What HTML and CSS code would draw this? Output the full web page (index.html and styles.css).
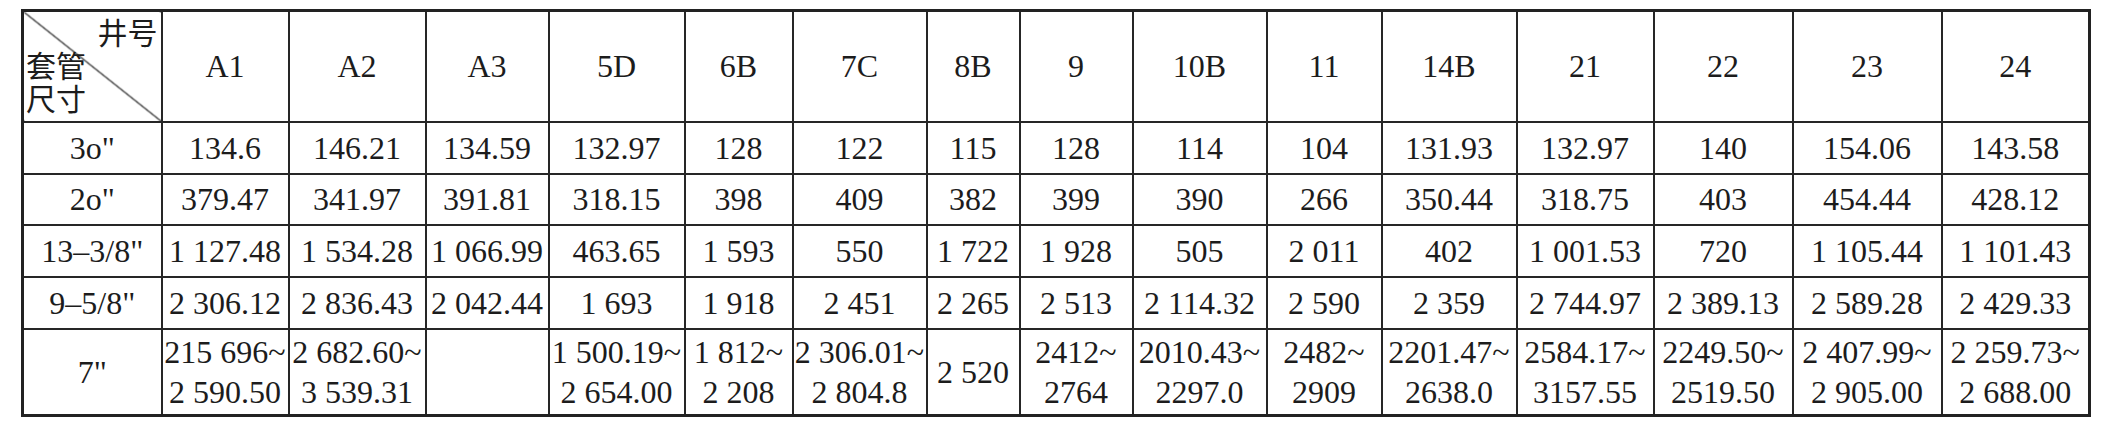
FILE: index.html
```html
<!DOCTYPE html>
<html lang="zh">
<head>
<meta charset="utf-8">
<title>套管尺寸</title>
<link rel="stylesheet" href="styles.css">
</head>
<body>
<table class="grid">
  <colgroup>
    <col class="c0"><col class="c1"><col class="c2"><col class="c3"><col class="c4"><col class="c5"><col class="c6"><col class="c7"><col class="c8"><col class="c9"><col class="c10"><col class="c11"><col class="c12"><col class="c13"><col class="c14"><col class="c15">
  </colgroup>
  <tr class="head">
    <th class="corner">
      <div class="corner-top">井号</div>
      <div class="corner-bottom">套管<br>尺寸</div>
    </th>
    <th>A1</th><th>A2</th><th>A3</th><th>5D</th><th>6B</th><th>7C</th><th>8B</th><th>9</th><th>10B</th><th>11</th><th>14B</th><th>21</th><th>22</th><th>23</th><th>24</th>
  </tr>
  <tr class="r1">
    <td>3o"</td><td>134.6</td><td>146.21</td><td>134.59</td><td>132.97</td><td>128</td><td>122</td><td>115</td><td>128</td><td>114</td><td>104</td><td>131.93</td><td>132.97</td><td>140</td><td>154.06</td><td>143.58</td>
  </tr>
  <tr class="r2">
    <td>2o"</td><td>379.47</td><td>341.97</td><td>391.81</td><td>318.15</td><td>398</td><td>409</td><td>382</td><td>399</td><td>390</td><td>266</td><td>350.44</td><td>318.75</td><td>403</td><td>454.44</td><td>428.12</td>
  </tr>
  <tr class="r3">
    <td>13–3/8"</td><td>1 127.48</td><td>1 534.28</td><td>1 066.99</td><td>463.65</td><td>1 593</td><td>550</td><td>1 722</td><td>1 928</td><td>505</td><td>2 011</td><td>402</td><td>1 001.53</td><td>720</td><td>1 105.44</td><td>1 101.43</td>
  </tr>
  <tr class="r4">
    <td>9–5/8"</td><td>2 306.12</td><td>2 836.43</td><td>2 042.44</td><td>1 693</td><td>1 918</td><td>2 451</td><td>2 265</td><td>2 513</td><td>2 114.32</td><td>2 590</td><td>2 359</td><td>2 744.97</td><td>2 389.13</td><td>2 589.28</td><td>2 429.33</td>
  </tr>
  <tr class="r5">
    <td>7"</td>
    <td>215 696~<br>2 590.50</td>
    <td>2 682.60~<br>3 539.31</td>
    <td></td>
    <td>1 500.19~<br>2 654.00</td>
    <td>1 812~<br>2 208</td>
    <td>2 306.01~<br>2 804.8</td>
    <td>2 520</td>
    <td>2412~<br>2764</td>
    <td>2010.43~<br>2297.0</td>
    <td>2482~<br>2909</td>
    <td>2201.47~<br>2638.0</td>
    <td>2584.17~<br>3157.55</td>
    <td>2249.50~<br>2519.50</td>
    <td>2 407.99~<br>2 905.00</td>
    <td>2 259.73~<br>2 688.00</td>
  </tr>
</table>
</body>
</html>
```
FILE: styles.css
```css
html, body {
  margin: 0;
  padding: 0;
  background: #ffffff;
}

body {
  padding: 9px 0 0 21px;
}

.grid {
  border-collapse: collapse;
  table-layout: fixed;
  width: 2068px;
  border: 3px solid #222222;
  font-family: "Liberation Serif", "Times New Roman", serif;
  font-size: 32px;
  color: #1c1c1c;
}

.grid th,
.grid td {
  border: 2px solid #262626;
  padding: 0;
  text-align: center;
  vertical-align: middle;
  font-weight: normal;
  white-space: nowrap;
  line-height: 40px;
}

.c0 { width: 139px; }
.c1 { width: 127px; }
.c2 { width: 137px; }
.c3 { width: 123px; }
.c4 { width: 136px; }
.c5 { width: 108px; }
.c6 { width: 134px; }
.c7 { width: 93px; }
.c8 { width: 113px; }
.c9 { width: 134px; }
.c10 { width: 115px; }
.c11 { width: 135px; }
.c12 { width: 137px; }
.c13 { width: 139px; }
.c14 { width: 149px; }
.c15 { width: 148px; }

.head { height: 111px; }
.r1 { height: 52px; }
.r2 { height: 51px; }
.r3 { height: 52px; }
.r4 { height: 52px; }
.r5 { height: 87px; }

.grid .corner {
  vertical-align: top;
  font-family: "Noto Sans CJK SC", "Noto Sans CJK TC", sans-serif;
  font-size: 30px;
  line-height: 33px;
  padding: 3px 3px 0 2px;
  background: linear-gradient(to top right,
    transparent calc(50% - 1.2px),
    #262626 50%,
    transparent calc(50% + 1.2px));
}

.corner-top {
  text-align: right;
}

.corner-bottom {
  text-align: left;
}
```
